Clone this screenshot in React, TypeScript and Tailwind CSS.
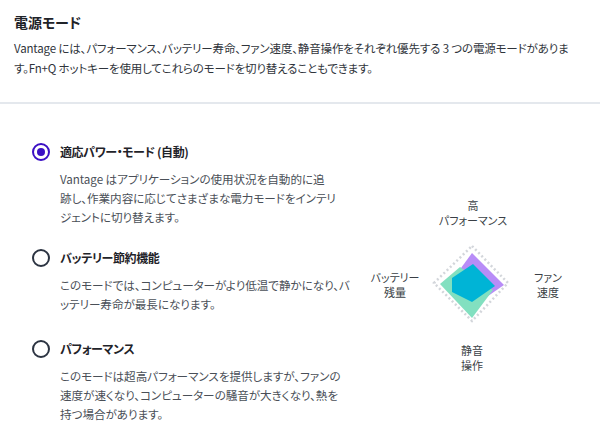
import React from "react";

const font = "font-['Segoe_UI','Noto_Sans_CJK_JP',sans-serif]";

function Radio({ checked }: { checked?: boolean }) {
  if (checked) {
    return (
      <span className="flex h-[18px] w-[18px] items-center justify-center rounded-full border-2 border-[#3b10c4]">
        <span className="h-[8px] w-[8px] rounded-full bg-[#3b10c4]" />
      </span>
    );
  }
  return <span className="h-[18px] w-[18px] rounded-full border-2 border-[#2c3442]" />;
}

function Option({
  checked,
  label,
  lines,
  className,
}: {
  checked?: boolean;
  label: string;
  lines: string[];
  className?: string;
}) {
  return (
    <div className={className}>
      <div className="flex h-[20px] items-center gap-[10px]">
        <Radio checked={checked} />
        <span className="text-[12px] font-bold tracking-[-0.4px] text-[#1f2329]">{label}</span>
      </div>
      <div className="mt-[8px] pl-[28px] text-[11.6px] leading-[19px] tracking-[-0.05px] text-[#4a4f57]">
        {lines.map((l, i) => (
          <div key={i} className="whitespace-nowrap">
            {l}
          </div>
        ))}
      </div>
    </div>
  );
}

function Chart() {
  return (
    <div className="relative h-[180px] w-[200px] text-[11px] leading-[15px] text-[#3a3f46]">
      <svg className="absolute inset-0" width="200" height="180" viewBox="0 0 200 180">
        <polygon
          points="100,51 136,88 100,126 62,88"
          fill="none"
          stroke="#d3d6db"
          strokeWidth="2.5"
          strokeDasharray="2 2.5"
        />
        <polygon points="100,58 132,90 100,112 78,88" fill="#b88cf7" />
        <polygon points="68,89 88,72 121,95 100,123" fill="#82e0c0" />
        <polygon points="101,69 123,91 100,107 80,97 80,83" fill="#00b4d6" />
      </svg>
      <div className="absolute left-[61px] top-[3px] w-[80px] text-center">
        <div>高</div>
        <div>パフォーマンス</div>
      </div>
      <div className="absolute left-[-17px] top-[75px] w-[80px] text-center">
        <div>バッテリー</div>
        <div>残量</div>
      </div>
      <div className="absolute left-[136px] top-[75px] w-[80px] text-center">
        <div>ファン</div>
        <div>速度</div>
      </div>
      <div className="absolute left-[60px] top-[148px] w-[80px] text-center">
        <div>静音</div>
        <div>操作</div>
      </div>
    </div>
  );
}

export default function App() {
  return (
    <div className={`h-[436px] w-[600px] overflow-hidden bg-white ${font} [font-feature-settings:'palt']`}>
      <div className="border-b-2 border-[#e4e8ed] px-[14px] pb-[24px] pt-[12px]">
        <div className="text-[14px] font-bold leading-[20px] text-[#1f2329]">電源モード</div>
        <div className="mt-[6px] text-[11.5px] leading-[20px] tracking-[-0.15px] text-[#2f343b]">
          <div className="whitespace-nowrap">
            Vantage には、パフォーマンス、バッテリー寿命、ファン速度、静音操作をそれぞれ優先する 3 つの電源モードがありま
          </div>
          <div className="whitespace-nowrap">す。Fn+Q ホットキーを使用してこれらのモードを切り替えることもできます。</div>
        </div>
      </div>
      <div className="flex">
        <div className="w-[340px] pl-[32px] pt-[38px]">
          <Option
            checked
            label="適応パワー・モード (自動)"
            lines={[
              "Vantage はアプリケーションの使用状況を自動的に追",
              "跡し、作業内容に応じてさまざまな電力モードをインテリ",
              "ジェントに切り替えます。",
            ]}
          />
          <Option
            className="mt-[21px]"
            label="バッテリー節約機能"
            lines={["このモードでは、コンピューターがより低温で静かになり、バ", "ッテリー寿命が最長になります。"]}
          />
          <Option
            className="mt-[25px]"
            label="パフォーマンス"
            lines={[
              "このモードは超高パフォーマンスを提供しますが、ファンの",
              "速度が速くなり、コンピューターの騒音が大きくなり、熱を",
              "持つ場合があります。",
            ]}
          />
        </div>
        <div className="pl-[32px] pt-[91px]">
          <Chart />
        </div>
      </div>
    </div>
  );
}
